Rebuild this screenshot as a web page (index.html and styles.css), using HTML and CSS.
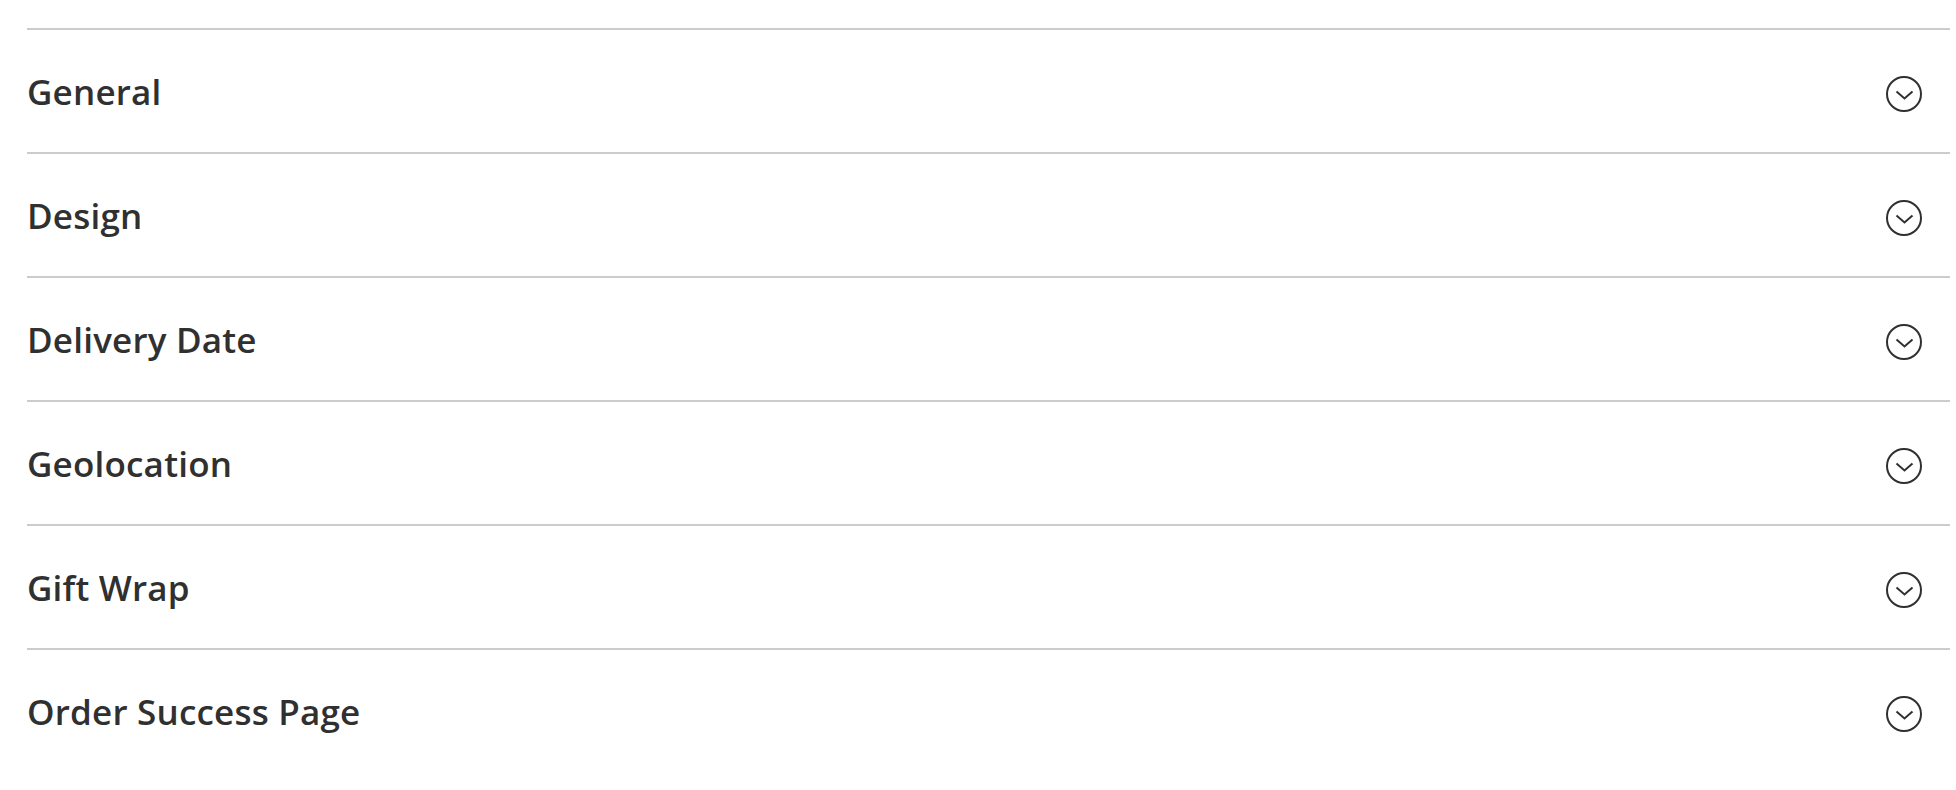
FILE: index.html
```html
<!DOCTYPE html>
<html lang="en-US">

<head>
    <meta charset="UTF-8">
    <meta name="viewport" content="width=device-width, initial-scale=1.0">
    <title>Configuration Sections</title>
    <link rel="stylesheet" href="styles.css">
</head>

<body>
    <div class="sections">
        <div class="section">
            <span class="section-title">General</span>
            <svg class="toggle" width="38" height="38" viewBox="0 0 38 38"><circle cx="19" cy="19" r="17"/><polyline points="11.5 16.5 19.5 23.5 27.5 16.5"/></svg>
        </div>
        <div class="section">
            <span class="section-title">Design</span>
            <svg class="toggle" width="38" height="38" viewBox="0 0 38 38"><circle cx="19" cy="19" r="17"/><polyline points="11.5 16.5 19.5 23.5 27.5 16.5"/></svg>
        </div>
        <div class="section">
            <span class="section-title">Delivery Date</span>
            <svg class="toggle" width="38" height="38" viewBox="0 0 38 38"><circle cx="19" cy="19" r="17"/><polyline points="11.5 16.5 19.5 23.5 27.5 16.5"/></svg>
        </div>
        <div class="section">
            <span class="section-title">Geolocation</span>
            <svg class="toggle" width="38" height="38" viewBox="0 0 38 38"><circle cx="19" cy="19" r="17"/><polyline points="11.5 16.5 19.5 23.5 27.5 16.5"/></svg>
        </div>
        <div class="section">
            <span class="section-title">Gift Wrap</span>
            <svg class="toggle" width="38" height="38" viewBox="0 0 38 38"><circle cx="19" cy="19" r="17"/><polyline points="11.5 16.5 19.5 23.5 27.5 16.5"/></svg>
        </div>
        <div class="section">
            <span class="section-title">Order Success Page</span>
            <svg class="toggle" width="38" height="38" viewBox="0 0 38 38"><circle cx="19" cy="19" r="17"/><polyline points="11.5 16.5 19.5 23.5 27.5 16.5"/></svg>
        </div>
    </div>
</body>

</html>
```

FILE: styles.css
```css
body {
    margin: 0;
    padding: 0;
    background-color: #fff;
    font-family: "Open Sans", "Liberation Sans", sans-serif;
    color: #303030;
}

.sections {
    padding: 28px 6px 0 27px;
}

.section {
    display: flex;
    align-items: center;
    justify-content: space-between;
    height: 122px;
    border-top: 2px solid #cccccc;
    cursor: pointer;
}

.section-title {
    font-size: 35px;
    font-weight: 600;
    letter-spacing: 0.2px;
}

.toggle {
    margin: 6px 27px 0 0;
    fill: none;
    stroke: #303030;
    stroke-width: 2;
}
```
